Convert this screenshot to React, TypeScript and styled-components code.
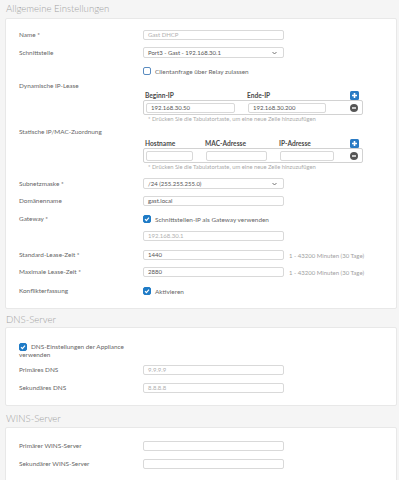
import React from 'react';
import styled, { createGlobalStyle } from 'styled-components';

const GlobalStyle = createGlobalStyle`
  body {
    margin: 0;
    background: #f5f5f5;
    font-family: Lato, "Open Sans", sans-serif;
    color: #555;
  }
`;

const Page = styled.div`
  width: 399px;
  overflow: hidden;
`;

const SectionTitle = styled.div<{ $h: number; $lh: number }>`
  height: ${p => p.$h}px;
  line-height: ${p => p.$lh}px;
  padding-left: 6px;
  font-size: 9.6px;
  font-weight: 300;
  color: #a3a3a3;
  white-space: nowrap;
`;

const Panel = styled.div<{ $pt: number; $pb: number }>`
  margin: 0 2px 0 5px;
  background: #fff;
  border: 1px solid #e8e8e8;
  border-radius: 2px;
  padding: ${p => p.$pt}px 0 ${p => p.$pb}px 13px;
  display: flex;
  flex-direction: column;
`;

const Row = styled.div<{ $mt?: number; $align?: string }>`
  display: flex;
  align-items: ${p => p.$align ?? 'center'};
  margin-top: ${p => p.$mt ?? 0}px;
`;

const Label = styled.div`
  width: 124px;
  flex: none;
  font-size: 6.4px;
  line-height: 8px;
  color: #666;
`;

const Input = styled.div<{ $w?: number; $muted?: boolean }>`
  box-sizing: border-box;
  width: ${p => p.$w ?? 141}px;
  height: 10px;
  border: 1px solid #d9d9d9;
  border-radius: 2px;
  background: #fff;
  padding-left: 4px;
  font-size: 6px;
  line-height: 8px;
  color: ${p => (p.$muted ? '#b0b0b0' : '#555')};
  white-space: nowrap;
  overflow: hidden;
`;

const Select = styled(Input)`
  height: 11px;
  line-height: 9px;
  position: relative;
  color: #555;
`;

const Chevron = styled.svg`
  position: absolute;
  right: 6px;
  top: 3px;
`;

const Note = styled.span`
  margin-left: 5px;
  font-size: 6px;
  color: #a0a0a0;
  white-space: nowrap;
`;

const CheckLine = styled.label`
  display: flex;
  align-items: center;
  gap: 4px;
  font-size: 6.4px;
  color: #666;
  white-space: nowrap;
`;

const Box = styled.span<{ $on?: boolean }>`
  box-sizing: border-box;
  width: 8px;
  height: 8px;
  flex: none;
  border-radius: 2px;
  border: 1px solid ${p => (p.$on ? '#1f7bc6' : '#5a8cc0')};
  background: ${p => (p.$on ? '#1f7bc6' : '#fff')};
  display: flex;
  align-items: center;
  justify-content: center;
`;

const Table = styled.div<{ $pt: number }>`
  padding-top: ${p => p.$pt}px;
  width: 220px;
  display: flex;
  flex-direction: column;
`;

const HeadRow = styled.div<{ $cols: string }>`
  display: grid;
  grid-template-columns: ${p => p.$cols};
  column-gap: 13px;
  align-items: end;
  height: 11px;
  padding: 0 1px 0 2px;
`;

const HeadCell = styled.div`
  font-size: 6.6px;
  font-weight: 700;
  color: #4a4a4a;
  line-height: 9px;
  white-space: nowrap;
`;

const BodyRow = styled.div<{ $cols: string }>`
  box-sizing: border-box;
  display: grid;
  grid-template-columns: ${p => p.$cols};
  column-gap: 13px;
  align-items: center;
  height: 15px;
  padding: 0 1px 0 2px;
  border: 1px solid #d2d2d2;
  border-radius: 2px;
`;

const Hint = styled.div`
  font-size: 5.8px;
  line-height: 6px;
  color: #aaa;
  padding-left: 5px;
  margin-top: 1px;
  white-space: nowrap;
`;

const IconCell = styled.div`
  display: flex;
  justify-content: flex-end;
  align-items: flex-end;
  padding-right: 3px;
`;

const PlusIcon = () => (
  <svg width="9" height="9" viewBox="0 0 9 9">
    <rect width="9" height="9" rx="1.5" fill="#2a7bc4" />
    <path d="M4.5 2v5M2 4.5h5" stroke="#fff" strokeWidth="1.6" />
  </svg>
);

const MinusIcon = () => (
  <svg width="8" height="8" viewBox="0 0 8 8">
    <circle cx="4" cy="4" r="4" fill="#555" />
    <path d="M2 4h4" stroke="#fff" strokeWidth="1.4" />
  </svg>
);

const Tick = () => (
  <svg width="6" height="6" viewBox="0 0 6 6">
    <path d="M1 3.2l1.4 1.4L5 1.6" stroke="#fff" strokeWidth="1.2" fill="none" />
  </svg>
);

const Check = ({ on, children }: { on?: boolean; children: React.ReactNode }) => (
  <CheckLine>
    <Box $on={on}>{on && <Tick />}</Box>
    {children}
  </CheckLine>
);

const WrapCheck = styled.div`
  width: 110px;
  font-size: 6.4px;
  line-height: 8px;
  color: #666;
  ${Box} {
    display: inline-flex;
    vertical-align: -1px;
    margin-right: 4px;
  }
`;

const SelectBox = ({ children, w }: { children: React.ReactNode; w?: number }) => (
  <Select $w={w}>
    {children}
    <Chevron width="5" height="4" viewBox="0 0 5 4">
      <path d="M0.5 1l2 2 2-2" stroke="#666" strokeWidth="0.9" fill="none" />
    </Chevron>
  </Select>
);

const dynCols = '89px 78px 1fr';
const staticCols = '47px 61px 54px 1fr';

export default function App() {
  return (
    <Page>
      <GlobalStyle />
      <SectionTitle $h={18} $lh={18}>Allgemeine Einstellungen</SectionTitle>
      <Panel $pt={11} $pb={13}>
        <Row>
          <Label>Name *</Label>
          <Input $muted>Gast DHCP</Input>
        </Row>
        <Row $mt={7}>
          <Label>Schnittstelle</Label>
          <SelectBox>Port3 - Gast - 192.168.30.1</SelectBox>
        </Row>
        <Row $mt={9}>
          <Label />
          <Check>Clientanfrage über Relay zulassen</Check>
        </Row>
        <Row $mt={7} $align="flex-start">
          <Label>Dynamische IP-Lease</Label>
          <Table $pt={7}>
            <HeadRow $cols={dynCols}>
              <HeadCell>Beginn-IP</HeadCell>
              <HeadCell>Ende-IP</HeadCell>
              <IconCell><PlusIcon /></IconCell>
            </HeadRow>
            <BodyRow $cols={dynCols}>
              <Input $w={89}>192.168.30.50</Input>
              <Input $w={78}>192.168.30.200</Input>
              <IconCell><MinusIcon /></IconCell>
            </BodyRow>
            <Hint>* Drücken Sie die Tabulatortaste, um eine neue Zeile hinzuzufügen</Hint>
          </Table>
        </Row>
        <Row $mt={6} $align="flex-start">
          <Label>Statische IP/MAC-Zuordnung</Label>
          <Table $pt={9}>
            <HeadRow $cols={staticCols}>
              <HeadCell>Hostname</HeadCell>
              <HeadCell>MAC-Adresse</HeadCell>
              <HeadCell>IP-Adresse</HeadCell>
              <IconCell><PlusIcon /></IconCell>
            </HeadRow>
            <BodyRow $cols={staticCols}>
              <Input $w={47} />
              <Input $w={61} />
              <Input $w={54} />
              <IconCell><MinusIcon /></IconCell>
            </BodyRow>
            <Hint>* Drücken Sie die Tabulatortaste, um eine neue Zeile hinzuzufügen</Hint>
          </Table>
        </Row>
        <Row $mt={8}>
          <Label>Subnetzmaske *</Label>
          <SelectBox>/24 (255.255.255.0)</SelectBox>
        </Row>
        <Row $mt={7}>
          <Label>Domänenname</Label>
          <Input>gast.local</Input>
        </Row>
        <Row $mt={9}>
          <Label>Gateway *</Label>
          <Check on>Schnittstellen-IP als Gateway verwenden</Check>
        </Row>
        <Row $mt={8}>
          <Label />
          <Input $muted>192.168.30.1</Input>
        </Row>
        <Row $mt={9}>
          <Label>Standard-Lease-Zeit *</Label>
          <Input>1440</Input>
          <Note>1 - 43200 Minuten (30 Tage)</Note>
        </Row>
        <Row $mt={7}>
          <Label>Maximale Lease-Zeit *</Label>
          <Input>2880</Input>
          <Note>1 - 43200 Minuten (30 Tage)</Note>
        </Row>
        <Row $mt={10}>
          <Label>Konflikterfassung</Label>
          <Check on>Aktivieren</Check>
        </Row>
      </Panel>

      <SectionTitle $h={18} $lh={22}>DNS-Server</SectionTitle>
      <Panel $pt={15} $pb={12}>
        <Row>
          <WrapCheck>
            <Box $on><Tick /></Box>DNS-Einstellungen der Appliance verwenden
          </WrapCheck>
        </Row>
        <Row $mt={6}>
          <Label>Primäres DNS</Label>
          <Input $muted>9.9.9.9</Input>
        </Row>
        <Row $mt={8}>
          <Label>Sekundäres DNS</Label>
          <Input $muted>8.8.8.8</Input>
        </Row>
      </Panel>

      <SectionTitle $h={21} $lh={26}>WINS-Server</SectionTitle>
      <Panel $pt={13} $pb={14}>
        <Row>
          <Label>Primärer WINS-Server</Label>
          <Input />
        </Row>
        <Row $mt={8}>
          <Label>Sekundärer WINS-Server</Label>
          <Input />
        </Row>
      </Panel>
    </Page>
  );
}
